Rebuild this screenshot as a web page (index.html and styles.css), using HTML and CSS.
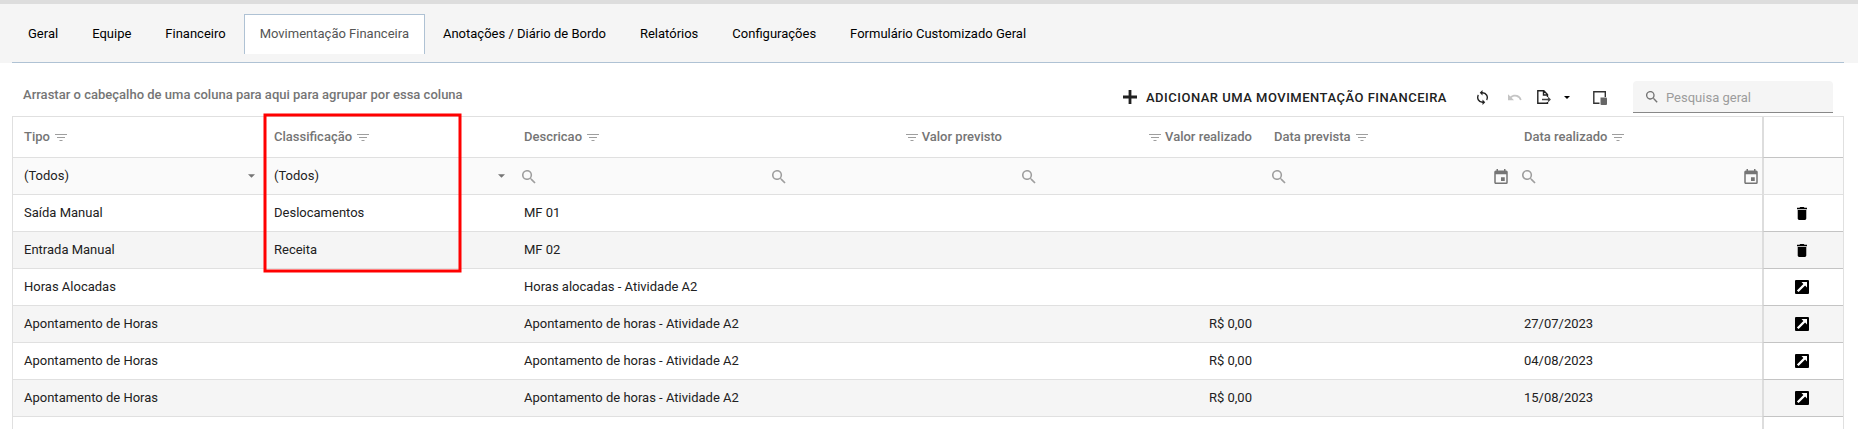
FILE: index.html
```
<!DOCTYPE html>
<html lang="pt-BR">
<head>
<meta charset="utf-8">
<title>Movimentação Financeira</title>
<link rel="stylesheet" href="styles.css">
</head>
<body>
<svg class="defs" width="0" height="0">
  <symbol id="search" viewBox="0 0 18 18"><path d="M12.5 11h-.8l-.3-.3a6.500 6.500 0 1 0-.7.7l.3.3v.8l5 5 1.500-1.500zm-6 0a4.500 4.500 0 1 1 0-9 4.500 4.500 0 0 1 0 9z"/></symbol>
  <symbol id="filter" viewBox="0 0 12 8"><path d="M0 0h12v1H0zM2 3h8v1H2zM4.500 6h3v1h-3z"/></symbol>
  <symbol id="caret" viewBox="0 0 8 4"><path d="M0 0h8L4 4z"/></symbol>
  <symbol id="calendar" viewBox="0 0 18 20"><path d="M14 11H9v5h5zM13 0v2H5V0H3v2H2a2 2 0 0 0-2 2v14c0 1.100.9 2 2 2h14a2 2 0 0 0 2-2V4a2 2 0 0 0-2-2h-1V0zm3 18H2V7h14z"/></symbol>
  <symbol id="trash" viewBox="0 0 14 18"><path d="M1 16c0 1.100.9 2 2 2h8a2 2 0 0 0 2-2V4H1zM14 1h-3.500l-1-1h-5l-1 1H0v2h14z"/></symbol>
  <symbol id="open" viewBox="0 0 14 14"><path d="M1 0h12a1 1 0 0 1 1 1v12a1 1 0 0 1-1 1H1a1 1 0 0 1-1-1V1a1 1 0 0 1 1-1z"/><path d="M6.500 2H12v5.500l-1.900-1.900-6.500 6.500-1.700-1.700 6.500-6.500z" fill="#fff"/></symbol>
</svg>
<nav class="tabs-bar">
  <div class="tabs">
    <a class="tab">Geral</a>
    <a class="tab">Equipe</a>
    <a class="tab">Financeiro</a>
    <a class="tab active">Movimentação Financeira</a>
    <a class="tab">Anotações / Diário de Bordo</a>
    <a class="tab">Relatórios</a>
    <a class="tab">Configurações</a>
    <a class="tab">Formulário Customizado Geral</a>
  </div>
</nav>
<main class="panel">
  <div class="toolbar">
    <span class="group-hint">Arrastar o cabeçalho de uma coluna para aqui para agrupar por essa coluna</span>
    <div class="actions">
      <button class="add"><svg class="plus" viewBox="0 0 14 14"><path d="M7 0v14M0 7h14"/></svg><span>Adicionar uma movimentação financeira</span></button>
      <svg class="refresh" viewBox="0 0 16 22"><path d="M8 3V0L4 4l4 4V5a6 6 0 0 1 5.300 8.800l1.460 1.460A8 8 0 0 0 8 3zm0 14a6 6 0 0 1-5.300-8.800L1.240 6.740A8 8 0 0 0 8 19v3l4-4-4-4z"/></svg>
      <svg class="undo" viewBox="0 0 21 10"><path d="M10.500 1c-2.650 0-5.050 1-6.900 2.600L0 0v9h9L5.380 5.380A8 8 0 0 1 18.100 9l2.370-.78A10.500 10.500 0 0 0 10.500 1z"/></svg>
      <svg class="export" viewBox="0 0 14 14"><path d="M10.500 7V4.500L6.800.8H.8v12.400h9.700V12M6.500.8V5h4" fill="none" stroke="#222" stroke-width="1.400"/><path d="M5 9.500h8M11 7.500l2 2-2 2" fill="none" stroke="#444" stroke-width="1.300"/></svg>
      <svg class="drop"><use href="#caret"/></svg>
      <svg class="chooser" viewBox="0 0 14 14"><path d="M6.500 12.300H.8V.8h11.500V6" fill="none" stroke="#333" stroke-width="1.400"/><path d="M7.500 6.500H13a1 1 0 0 1 1 1V13a1 1 0 0 1-1 1H8.500a1 1 0 0 1-1-1z" fill="#666"/></svg>
      <div class="search-box"><svg><use href="#search"/></svg><span>Pesquisa geral</span></div>
    </div>
  </div>
  <div class="grid">
    <div class="row head">
      <div class="cell">Tipo<svg class="funnel"><use href="#filter"/></svg></div>
      <div class="cell">Classificação<svg class="funnel"><use href="#filter"/></svg></div>
      <div class="cell">Descricao<svg class="funnel"><use href="#filter"/></svg></div>
      <div class="cell num"><svg class="funnel"><use href="#filter"/></svg>Valor previsto</div>
      <div class="cell num"><svg class="funnel"><use href="#filter"/></svg>Valor realizado</div>
      <div class="cell">Data prevista<svg class="funnel"><use href="#filter"/></svg></div>
      <div class="cell">Data realizado<svg class="funnel"><use href="#filter"/></svg></div>
      <div class="cell fixed"></div>
    </div>
    <div class="row filters">
      <div class="cell select">(Todos)<svg class="arrow"><use href="#caret"/></svg></div>
      <div class="cell select">(Todos)<svg class="arrow"><use href="#caret"/></svg></div>
      <div class="cell find"><svg class="lens"><use href="#search"/></svg></div>
      <div class="cell find"><svg class="lens"><use href="#search"/></svg></div>
      <div class="cell find"><svg class="lens"><use href="#search"/></svg></div>
      <div class="cell find"><svg class="lens"><use href="#search"/></svg><svg class="cal"><use href="#calendar"/></svg></div>
      <div class="cell find last"><svg class="lens"><use href="#search"/></svg><svg class="cal"><use href="#calendar"/></svg></div>
      <div class="cell fixed"></div>
    </div>
    <div class="row"><div class="cell">Saída Manual</div><div class="cell">Deslocamentos</div><div class="cell">MF 01</div><div class="cell"></div><div class="cell"></div><div class="cell"></div><div class="cell"></div><div class="cell fixed"><svg class="trash"><use href="#trash"/></svg></div></div>
    <div class="row alt"><div class="cell">Entrada Manual</div><div class="cell">Receita</div><div class="cell">MF 02</div><div class="cell"></div><div class="cell"></div><div class="cell"></div><div class="cell"></div><div class="cell fixed"><svg class="trash"><use href="#trash"/></svg></div></div>
    <div class="row"><div class="cell">Horas Alocadas</div><div class="cell"></div><div class="cell">Horas alocadas - Atividade A2</div><div class="cell"></div><div class="cell"></div><div class="cell"></div><div class="cell"></div><div class="cell fixed"><svg class="open"><use href="#open"/></svg></div></div>
    <div class="row alt"><div class="cell">Apontamento de Horas</div><div class="cell"></div><div class="cell">Apontamento de horas - Atividade A2</div><div class="cell"></div><div class="cell num">R$ 0,00</div><div class="cell"></div><div class="cell">27/07/2023</div><div class="cell fixed"><svg class="open"><use href="#open"/></svg></div></div>
    <div class="row"><div class="cell">Apontamento de Horas</div><div class="cell"></div><div class="cell">Apontamento de horas - Atividade A2</div><div class="cell"></div><div class="cell num">R$ 0,00</div><div class="cell"></div><div class="cell">04/08/2023</div><div class="cell fixed"><svg class="open"><use href="#open"/></svg></div></div>
    <div class="row alt"><div class="cell">Apontamento de Horas</div><div class="cell"></div><div class="cell">Apontamento de horas - Atividade A2</div><div class="cell"></div><div class="cell num">R$ 0,00</div><div class="cell"></div><div class="cell">15/08/2023</div><div class="cell fixed"><svg class="open"><use href="#open"/></svg></div></div>
    <div class="row rest"><div class="cell"></div><div class="cell"></div><div class="cell"></div><div class="cell"></div><div class="cell"></div><div class="cell"></div><div class="cell"></div><div class="cell fixed"></div></div>
  </div>
</main>
<svg class="highlight" viewBox="0 0 200 162"><rect x="3" y="3" width="195" height="156"/></svg>
</body>
</html>
```
FILE: styles.css
```
* { box-sizing: border-box; }
body {
  margin: 0;
  height: 429px;
  overflow: hidden;
  background: #fff;
  color: #212121;
  font: 13px/20px Roboto, sans-serif;
}
svg { display: block; flex: none; fill: currentColor; }
.defs { position: absolute; }
.tabs-bar {
  height: 63px;
  padding: 10px 14px 0 12px;
  border-top: 4px solid #ddd;
  background: #f5f5f5;
}
.tabs {
  display: flex;
  gap: 2px;
  height: 49px;
  border-bottom: 1px solid #afc2d4;
}
.tab {
  height: 40px;
  padding: 9px 15px 0;
  border: 1px solid transparent;
  border-bottom: 0;
  color: #000;
  white-space: nowrap;
}
.tab.active { background: #fff; border-color: #afc2d4; color: #555; }
.panel { padding: 0 14px 0 12px; }
.toolbar {
  display: flex;
  justify-content: space-between;
  height: 53px;
  padding: 17px 11px 0 11px;
}
.group-hint { padding-top: 5px; height: 25px; line-height: 20px; color: #757575; font-weight: 500; letter-spacing: .01px; }
.actions { display: flex; align-items: center; height: 34px; }
.add {
  display: flex;
  align-items: center;
  margin: 0 30px 0 0;
  padding: 0;
  border: 0;
  background: none;
  color: #212121;
  font: 500 13px/20px Roboto, sans-serif;
  letter-spacing: .5px;
  text-transform: uppercase;
}
.add span, .search-box span { padding-top: 2px; }
.plus { width: 14px; height: 14px; margin-right: 9px; stroke: #212121; stroke-width: 2.800; }
.refresh { width: 11px; height: 15px; margin: 1px 20px 0 0; }
.undo { width: 14px; height: 7px; margin-right: 15px; color: #c4c4c4; }
.export { width: 14px; height: 14px; margin-right: 13px; }
.drop { width: 6px; height: 3px; margin: 1px 23px 0 0; color: #000; }
.chooser { width: 14px; height: 14px; margin: 1px 26px 0 0; }
.search-box {
  display: flex;
  align-items: center;
  gap: 8px;
  width: 200px;
  height: 32px;
  padding-left: 13px;
  border-bottom: 1px solid #888;
  border-radius: 4px 4px 0 0;
  background: #f5f5f5;
  color: #9c9c9c;
}
.search-box svg { width: 12px; height: 12px; color: #757575; }
.grid { border: 1px solid #e0e0e0; border-bottom: 0; }
.row {
  display: grid;
  grid-template-columns: repeat(6, 250px) 249px 1fr;
  height: 37px;
}
.head { height: 41px; color: #757575; font-weight: 500; }
.rest { height: 12px; }
.rest .cell { border-bottom: 0; }
.filters { background: #fafafa; }
.alt { background: #f5f5f5; }
.cell {
  display: flex;
  align-items: center;
  padding: 0 11px;
  border-bottom: 1px solid #e0e0e0;
  white-space: nowrap;
}
.num { justify-content: flex-end; }
.fixed {
  justify-content: center;
  padding: 0 4px 0 0;
  border-left: 2px solid #ddd;
  border-bottom-color: #c4c4c4;
  color: #000;
}
.filters .fixed { border-bottom-color: #e0e0e0; }
.funnel { width: 12px; height: 8px; margin: 1px 0 0 5px; color: #9e9e9e; }
.num .funnel { margin: 1px 4px 0 0; }
.select { justify-content: space-between; padding-right: 8px; }
.arrow { width: 7px; height: 4px; color: #757575; }
.find { justify-content: space-between; padding: 0 5px 0 9px; }
.find.last { padding-right: 4px; }
.lens { width: 14px; height: 14px; margin-top: 2px; color: #9e9e9e; }
.cal { width: 14px; height: 15px; color: #757575; }
.trash { width: 10px; height: 13px; }
.open { width: 14px; height: 14px; }
.highlight {
  position: absolute;
  left: 262px;
  top: 112px;
  width: 200px;
  height: 162px;
  fill: none;
  stroke: #f00;
  stroke-width: 3;
}
```
